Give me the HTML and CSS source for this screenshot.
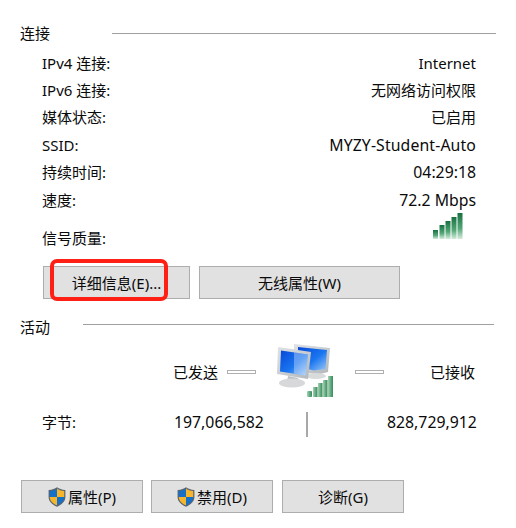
FILE: index.html
```html
<!DOCTYPE html>
<html lang="zh-CN">
<head>
<meta charset="utf-8">
<title>WLAN 状态</title>
<link rel="stylesheet" href="styles.css">
</head>
<body>
<svg class="defs" width="0" height="0" aria-hidden="true">
  <defs>
    <linearGradient id="bar" x1="0" y1="0" x2="0" y2="1">
      <stop offset="0" stop-color="#177040"/>
      <stop offset="0.6" stop-color="#55a878"/>
      <stop offset="1" stop-color="#d5ecdd"/>
    </linearGradient>
    <linearGradient id="miniBar" x1="0" y1="0" x2="1" y2="0">
      <stop offset="0" stop-color="#a5d2b5"/>
      <stop offset="0.5" stop-color="#65ad82"/>
      <stop offset="1" stop-color="#3c8a5c"/>
    </linearGradient>
    <linearGradient id="screen" x1="0" y1="0" x2="1" y2="1">
      <stop offset="0" stop-color="#0848d8"/>
      <stop offset="0.55" stop-color="#1a76f0"/>
      <stop offset="1" stop-color="#9cc8f6"/>
    </linearGradient>
    <linearGradient id="frame" x1="0" y1="0" x2="1" y2="1">
      <stop offset="0" stop-color="#dfe3e6"/>
      <stop offset="1" stop-color="#b2b7bb"/>
    </linearGradient>
    <symbol id="shield" viewBox="0 0 18 20">
      <path d="M9 .3C7 1.800 4.300 2.800 .6 3V10c0 4.500 3.800 7.800 8.400 9.700 4.600-1.900 8.400-5.200 8.400-9.700V3C13.700 2.800 11 1.800 9 .3z" fill="#5a6470"/>
      <path d="M9 1.600V10H1.800V4.100C4.800 3.900 7.200 3 9 1.600z" fill="#1670c8"/>
      <path d="M9 1.600V10h7.200V4.100C13.200 3.900 10.800 3 9 1.600z" fill="#f7b52c"/>
      <path d="M1.800 10H9v8.300C5 16.700 1.800 14 1.800 10z" fill="#f7b52c"/>
      <path d="M16.200 10H9v8.300c4-1.600 7.200-4.300 7.200-8.300z" fill="#1670c8"/>
    </symbol>
  </defs>
</svg>

<main class="panel">
  <section class="connection">
    <header class="group-head connection-head">
      <h2 class="group-title">连接</h2>
      <span class="rule"></span>
    </header>
    <dl class="facts">
      <div class="fact"><dt>IPv4 连接:</dt><dd>Internet</dd></div>
      <div class="fact"><dt>IPv6 连接:</dt><dd>无网络访问权限</dd></div>
      <div class="fact"><dt>媒体状态:</dt><dd>已启用</dd></div>
      <div class="fact"><dt>SSID:</dt><dd class="wide ssid">MYZY-Student-Auto</dd></div>
      <div class="fact"><dt>持续时间:</dt><dd class="wide">04:29:18</dd></div>
      <div class="fact"><dt>速度:</dt><dd class="wide">72.2 Mbps</dd></div>
    </dl>
    <div class="signal-row">
      <span>信号质量:</span>
      <svg class="signal" width="32" height="27" viewBox="0 0 32 27" aria-hidden="true">
        <rect x="1" y="17" width="5" height="9" fill="url(#bar)"/>
        <rect x="7.500" y="12" width="5" height="14" fill="url(#bar)"/>
        <rect x="13.500" y="8" width="5" height="18" fill="url(#bar)"/>
        <rect x="19.500" y="4" width="5" height="22" fill="url(#bar)"/>
        <rect x="25.500" y="0" width="5" height="26" fill="url(#bar)"/>
      </svg>
    </div>
    <div class="actions actions-top">
      <span class="marked">
        <button class="btn btn-details" type="button">详细信息(E)...</button>
        <span class="marker"></span>
      </span>
      <button class="btn btn-wireless" type="button">无线属性(W)</button>
    </div>
  </section>

  <section class="activity">
    <header class="group-head activity-head">
      <h2 class="group-title">活动</h2>
      <span class="rule"></span>
    </header>
    <div class="traffic">
      <span class="sent">已发送</span>
      <span class="dash"></span>
      <svg class="network" width="58" height="54" viewBox="0 0 58 54" aria-hidden="true">
        <path d="M18 0l36 4-2 24-8 2-14-1-12-6z" fill="url(#frame)"/>
        <path d="M22 3l29 3-1.500 19-12 1.500L22 22z" fill="url(#screen)"/>
        <ellipse cx="40" cy="32" rx="10" ry="3" fill="#d8dadb"/>
        <path d="M2 3l33 5-3 27L1 30z" fill="url(#frame)"/>
        <path d="M5 6.500l27 4-2.500 21L4 27.500z" fill="url(#screen)"/>
        <path d="M18 8.500l14 2-2.500 21-11.500-2z" fill="#fff" opacity=".32"/>
        <path d="M12 32l10 2 1 4H11z" fill="#bcc0c3"/>
        <ellipse cx="16" cy="39" rx="13" ry="4.500" fill="#d6d8d9"/>
        <rect x="31" y="47" width="5" height="6" rx="1" fill="url(#miniBar)"/>
        <rect x="37" y="43" width="4.500" height="10" fill="url(#miniBar)"/>
        <rect x="42" y="39" width="4.500" height="14" fill="url(#miniBar)"/>
        <rect x="47" y="36" width="4.500" height="17" fill="url(#miniBar)"/>
        <rect x="52" y="32" width="5" height="21" fill="url(#miniBar)"/>
      </svg>
      <span class="dash"></span>
      <span class="received">已接收</span>
    </div>
    <div class="bytes">
      <span class="bytes-label">字节:</span>
      <span class="bytes-sent wide">197,066,582</span>
      <span class="divider"></span>
      <span class="bytes-received wide">828,729,912</span>
    </div>
    <div class="actions actions-bottom">
      <button class="btn btn-foot" type="button"><svg class="shield" width="18" height="20"><use href="#shield"/></svg>属性(P)</button>
      <button class="btn btn-foot" type="button"><svg class="shield" width="18" height="20"><use href="#shield"/></svg>禁用(D)</button>
      <button class="btn btn-foot btn-last" type="button">诊断(G)</button>
    </div>
  </section>
</main>
</body>
</html>
```

FILE: styles.css
```css
* { box-sizing: border-box; }

html, body {
  margin: 0;
  background: #fff;
}

body {
  width: 516px;
  height: 528px;
  overflow: hidden;
  color: #0a0a0a;
  font-family: "Noto Sans", "Noto Sans CJK SC", sans-serif;
  font-size: 15px;
  line-height: 20px;
}

.defs { position: absolute; }

.wide { font-size: 15.800px; }
.ssid { letter-spacing: .12px; }

.panel {
  display: flex;
  flex-direction: column;
  padding: 23px 20px 0;
}

.group-head {
  display: flex;
  align-items: center;
  height: 20px;
}

.group-title {
  margin: 0;
  font: inherit;
}

.rule {
  flex: 1;
  height: 1px;
  background: #a0a0a0;
}

.connection-head .rule { margin-left: 62px; }
.activity-head .rule { margin: -6px 2px 0 33px; }

.facts {
  margin: 6px 0 0;
  padding: 0 20px 0 22px;
}

.fact {
  display: flex;
  justify-content: space-between;
  height: 27.400px;
  align-items: center;
}

.fact dt, .fact dd { margin: 0; }

.signal-row {
  display: flex;
  justify-content: space-between;
  align-items: flex-end;
  height: 30px;
  margin-top: 5px;
  padding: 0 32px 0 22px;
}

.signal { margin-bottom: 8px; }

.actions { display: flex; }

.actions-top {
  gap: 9px;
  margin-top: 18px;
  padding-left: 23px;
}

.btn {
  height: 33px;
  padding: 0;
  border: 1px solid #adadad;
  background: #e1e1e1;
  color: #0a0a0a;
  font: inherit;
  display: flex;
  align-items: center;
  justify-content: center;
}

.marked { position: relative; display: block; }

.marker {
  position: absolute;
  left: 7px;
  top: -7px;
  width: 118px;
  height: 42px;
  border: 4px solid #ff2015;
  border-radius: 7px;
}

.btn-details { width: 147px; }
.btn-wireless { width: 201px; }

.activity { margin-top: 18px; }

.traffic {
  display: flex;
  align-items: flex-start;
  margin-top: 16px;
  height: 54px;
  padding-left: 153px;
}

.sent, .received { margin-top: 9px; }

.dash {
  width: 29px;
  height: 4px;
  margin: 17px 0 0 9px;
  border: 1px solid #b0b0b0;
  background: #fff;
}

.network { margin: -9px 0 0 20px; }

.traffic .network + .dash { margin-left: 21px; }

.received { margin-left: 46px; }

.bytes {
  display: flex;
  align-items: center;
  height: 26px;
  margin-top: 2px;
  padding-left: 22px;
}

.bytes-label { width: 132px; }
.bytes-sent { width: 132px; }

.divider {
  width: 2px;
  height: 25px;
  margin-top: 5px;
  background: #a8a8a8;
}

.bytes-received { margin-left: 79px; }

.actions-bottom {
  gap: 8px;
  margin-top: 45px;
  padding-left: 1px;
}

.btn-foot { width: 122px; }
.btn-last { margin-left: 1px; }

.shield { margin-right: 2px; }
```
